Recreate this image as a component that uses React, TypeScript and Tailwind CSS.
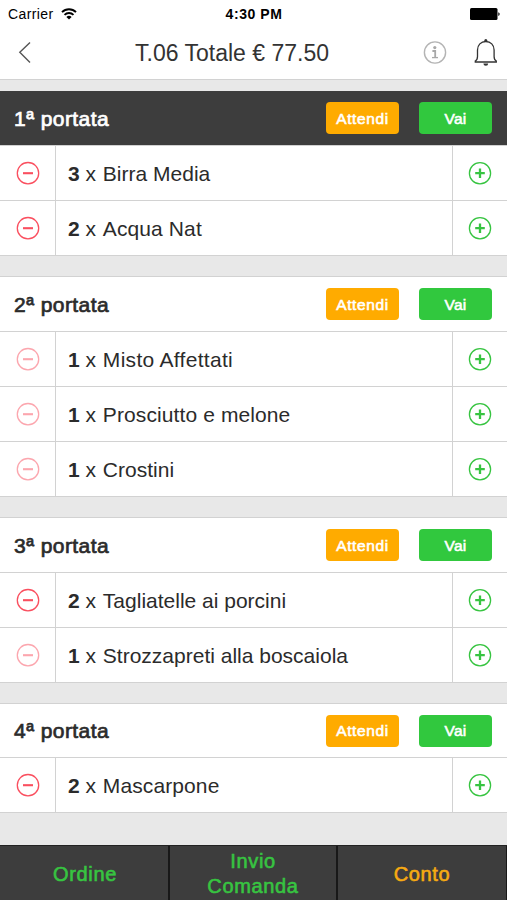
import React from 'react';

type Item = { qty: number; name: string; faded?: boolean; className?: string };
type Course = { title: string; active?: boolean; className: string; items: Item[] };

const courses: Course[] = [
  {
    title: '1ª portata',
    active: true,
    className: 'mt-[11px]',
    items: [
      { qty: 3, name: 'Birra Media' },
      { qty: 2, name: 'Acqua Nat', className: 'tracking-[0.1px]' },
    ],
  },
  {
    title: '2ª portata',
    className: 'mt-5 border-t',
    items: [
      { qty: 1, name: 'Misto Affettati', faded: true, className: 'tracking-[0.3px]' },
      { qty: 1, name: 'Prosciutto e melone', faded: true, className: 'tracking-[0.1px]' },
      { qty: 1, name: 'Crostini', faded: true },
    ],
  },
  {
    title: '3ª portata',
    className: 'mt-5 border-t',
    items: [
      { qty: 2, name: 'Tagliatelle ai porcini' },
      { qty: 1, name: 'Strozzapreti alla boscaiola', faded: true },
    ],
  },
  {
    title: '4ª portata',
    className: 'mt-5 border-t',
    items: [{ qty: 2, name: 'Mascarpone', className: 'tracking-[0.1px]' }],
  },
];

function StatusBar() {
  return (
    <div className="grid h-[27px] grid-cols-3 items-center pl-2 pr-[7px] text-black">
      <div className="flex items-center gap-[7px]">
        <span className="pt-px text-[14px] tracking-[0.4px]">Carrier</span>
        <svg width="16" height="12" viewBox="0 0 16 12" fill="none" stroke="currentColor" strokeWidth="1.9">
          <path d="M1 4.1a10 10 0 0 1 14 0" />
          <path d="M3.5 6.9a6.4 6.4 0 0 1 9 0" />
          <path d="M8 11.6 5.4 9a3.7 3.7 0 0 1 5.2 0z" fill="currentColor" stroke="none" />
        </svg>
      </div>
      <span className="pt-px text-center text-[14px] font-bold tracking-[0.55px]">4:30 PM</span>
      <svg className="justify-self-end" width="30" height="12" viewBox="0 0 30 12">
        <rect x="0" y="0" width="27.5" height="12" rx="1.5" />
        <path d="M28.3 4.2a2 2 0 0 1 0 3.8z" />
      </svg>
    </div>
  );
}

function NavBar() {
  return (
    <div className="flex h-[52px] items-center pl-[18px] pr-[9px]">
      <button className="w-[14px]">
        <svg width="14" height="22" viewBox="0 0 14 22" fill="none" stroke="#555" strokeWidth="1.4">
          <path d="M12 .5 1.8 10.3 12 20.5" />
        </svg>
      </button>
      <h1 className="flex-1 pl-[9px] text-center text-[23px] whitespace-nowrap text-[#333]">T.06 Totale € 77.50</h1>
      <div className="flex w-[75px] items-center justify-between">
        <svg width="24" height="24" viewBox="0 0 24 24" fill="none" stroke="#b4b4b4">
          <circle cx="12" cy="11.5" r="10.6" strokeWidth="1.4" />
          <circle cx="11.8" cy="6.6" r="1.6" fill="#a8a8a8" stroke="none" />
          <path d="M9.4 10h2.8v6.5" stroke="#a8a8a8" strokeWidth="1.8" />
          <path d="M9 16.6h6" stroke="#a8a8a8" strokeWidth="1.3" />
        </svg>
        <svg width="24" height="28" viewBox="0 0 24 28" fill="none" stroke="#333" strokeWidth="1.3">
          <path d="M1.3 23h21v-1c-1.5-.7-2.2-1.8-2.2-4.4v-6.6c0-5-3.4-8.5-8.3-8.5S3.5 6 3.5 11v6.6c0 2.6-.7 3.7-2.2 4.4z" />
          <circle cx="11.8" cy="1.6" r="1.5" fill="#333" stroke="none" />
          <path d="M9.4 24.4h4.8a2.4 2.4 0 0 1-4.8 0z" fill="#333" stroke="none" />
        </svg>
      </div>
    </div>
  );
}

function MinusIcon({ faded }: { faded?: boolean }) {
  return (
    <svg width="24" height="24" viewBox="0 0 24 24" fill="none" stroke="#fa4f5f" className={faded ? 'opacity-50' : ''}>
      <circle cx="12" cy="12.2" r="10.7" strokeWidth="1.3" />
      <path d="M7 12.2h10" strokeWidth="2.1" />
    </svg>
  );
}

function PlusIcon() {
  return (
    <svg width="24" height="24" viewBox="0 0 24 24" fill="none" stroke="#37c441">
      <circle cx="12" cy="12.2" r="10.6" strokeWidth="1.3" />
      <path d="M7.2 12.2h9.6M12 7.4V17" strokeWidth="2.3" />
    </svg>
  );
}

function CourseSection({ course }: { course: Course }) {
  return (
    <section className={`group border-[#d2d2d2] bg-white ${course.className}`}>
      <div
        className={`flex h-[55px] items-center border-b border-[#d2d2d2] pl-[14px] pr-[15px] group-last:h-[54px] ${
          course.active ? 'bg-[#3d3d3d] text-white' : 'text-[#2b2b2b]'
        }`}
      >
        <h2 className="flex-1 pt-px text-[21px] tracking-[0.45px] [-webkit-text-stroke:0.7px_currentColor]">
          {course.title}
        </h2>
        <button className="h-8 w-[73px] rounded-[4px] bg-[#ffab00] pt-px text-[15.5px] tracking-[0.6px] text-white [-webkit-text-stroke:0.6px_currentColor]">
          Attendi
        </button>
        <button className="ml-5 h-8 w-[73px] rounded-[4px] bg-[#31c83e] pt-px text-[15.5px] tracking-[0.3px] text-white [-webkit-text-stroke:0.6px_currentColor]">
          Vai
        </button>
      </div>
      {course.items.map((item) => (
        <div key={item.name} className="flex h-[55px] border-b border-[#d2d2d2]">
          <button className="flex w-14 items-center justify-center border-r border-[#d2d2d2]">
            <MinusIcon faded={item.faded} />
          </button>
          <div className="flex flex-1 items-center pt-[2px] pl-3 text-[21px] whitespace-pre text-[#2b2b2b]">
            <b>{item.qty}</b> x <span className={`pl-px ${item.className ?? ''}`}>{item.name}</span>
          </div>
          <button className="flex w-[55px] items-center justify-center border-l border-[#d2d2d2]">
            <PlusIcon />
          </button>
        </div>
      ))}
    </section>
  );
}

export default function App() {
  return (
    <div className="flex h-[900px] w-[507px] flex-col overflow-hidden bg-[#e8e8e8] font-['Liberation_Sans',Arial,sans-serif]">
      <header className="h-20 shrink-0 border-b border-[#d2d2d2] bg-white">
        <StatusBar />
        <NavBar />
      </header>

      <main className="flex-1">
        {courses.map((course) => (
          <CourseSection key={course.title} course={course} />
        ))}
      </main>

      {/* Bottom actions */}
      <footer className="grid h-[55px] shrink-0 grid-cols-[170px_168px_169px] border-t border-[#222] bg-[#3d3d3d] text-center text-[20px] leading-[25px] tracking-[0.65px] text-[#37c441] [-webkit-text-stroke:0.6px_currentColor]">
        <button className="border-r-2 border-[#181818] pt-[3px] pl-[2px]">Ordine</button>
        <button className="border-r-2 border-[#181818] pt-px">
          Invio
          <br />
          Comanda
        </button>
        <button className="border-r border-[#181818] pt-[3px] text-[#f7ab12]">Conto</button>
      </footer>
    </div>
  );
}
